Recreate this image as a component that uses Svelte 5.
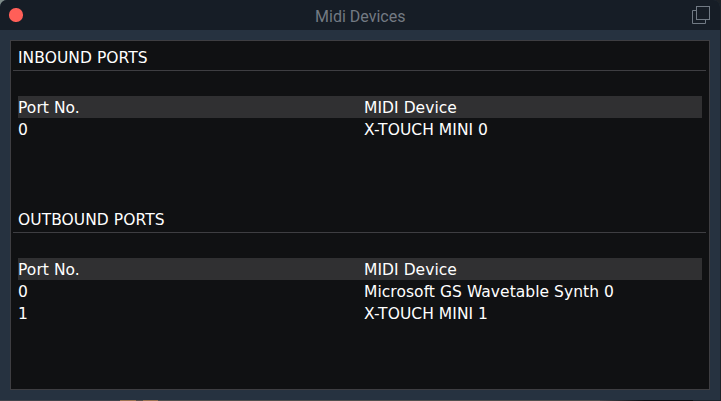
<script>
  const sections = [
    { title: 'INBOUND PORTS', rows: [['0', 'X-TOUCH MINI 0']] },
    {
      title: 'OUTBOUND PORTS',
      rows: [
        ['0', 'Microsoft GS Wavetable Synth 0'],
        ['1', 'X-TOUCH MINI 1'],
      ],
    },
  ];
</script>

<div class="desktop">
  <main class="window">
    <header class="titlebar">
      <span class="close"></span>
      <h1>Midi Devices</h1>
      <svg class="popout" width="18" height="18" viewBox="0 0 18 18" fill="none" stroke="#717a84">
        <path d="M4.5 4.5H0.5V17.5H13.5V13.5" />
        <rect x="4.5" y="0.5" width="13" height="13" />
      </svg>
    </header>
    <div class="panel">
      {#each sections as section}
        <section>
          <h2>{section.title}</h2>
          <div class="table">
            <div class="row head"><span>Port No.</span><span>MIDI Device</span></div>
            {#each section.rows as row}
              <div class="row"><span>{row[0]}</span><span>{row[1]}</span></div>
            {/each}
          </div>
        </section>
      {/each}
    </div>
  </main>
</div>

<style>
  :global(body) {
    margin: 0;
    overflow: hidden;
  }
  .desktop {
    width: 721px;
    height: 401px;
    overflow: hidden;
    background:
      linear-gradient(#7e8b89, #7e8b89) 0 0 / 8px 8px no-repeat,
      linear-gradient(90deg, #40444b 0 120px, #a07452 120px 136px, #5b5049 136px 143px, #a07452 143px 158px, #50504f 158px 600px, #42444a 600px, #0c0f12 645px 693px, #1d242c 693px) 0 400px / 721px 1px no-repeat,
      #1d2228;
  }
  .window {
    display: flex;
    flex-direction: column;
    box-sizing: border-box;
    width: 720px;
    height: 400px;
    background: #263240;
    border-radius: 7px 7px 0 0;
    overflow: hidden;
  }
  .titlebar {
    display: flex;
    align-items: center;
    justify-content: space-between;
    box-sizing: border-box;
    height: 30px;
    flex: none;
    padding: 0 10px 0 9.4px;
    background: #161d26;
  }
  .close {
    width: 13.2px;
    height: 13.2px;
    margin-right: 5px;
    border-radius: 50%;
    background: #ff5f58;
  }
  h1 {
    margin: 0;
    padding: 3px 0 0 1px;
    font: 400 16px/20px Roboto, sans-serif;
    color: #737a83;
  }
  .popout {
    display: block;
  }
  .panel {
    box-sizing: border-box;
    flex: 1;
    margin: 10px;
    padding: 4px 3px 0 2px;
    border: 1px solid #3e3e42;
    background: #101113;
    color: #fff;
    font: 15.5px/22px "DejaVu Sans", sans-serif;
    letter-spacing: 0.05px;
  }
  section {
    height: 162px;
  }
  h2 {
    box-sizing: border-box;
    height: 26px;
    margin: 0 0 25px;
    padding: 2px 0 0 5px;
    border-bottom: 1px solid #3e3e42;
    font: inherit;
    white-space: nowrap;
  }
  .table {
    margin: 0 4px 0 5px;
  }
  .row {
    display: grid;
    grid-template-columns: 346px 1fr;
    height: 22px;
    line-height: 25px;
  }
  .head {
    background: #303032;
  }
</style>
